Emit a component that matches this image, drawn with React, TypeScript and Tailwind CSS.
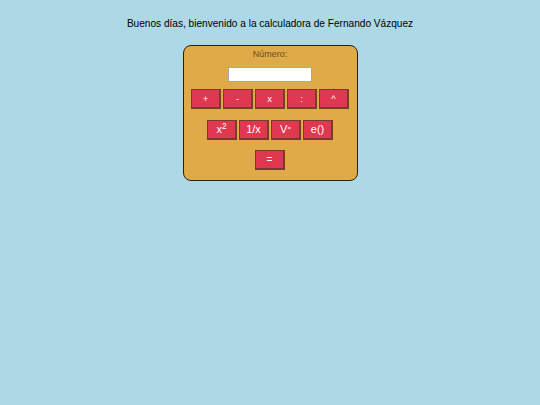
import React, { useState } from "react";

const btn =
  "h-[20px] w-[30px] bg-[#df3850] text-white leading-none border border-[#7d3a2c] border-b-2 border-r-2 flex items-center justify-center";

export default function App() {
  const [value, setValue] = useState("");

  return (
    <div className="min-h-screen w-full bg-[#add8e6] flex flex-col items-center pt-[17px] font-['Liberation_Sans',Arial,sans-serif]">
      <p className="text-[10.1px] leading-[14px] text-black">
        Buenos días, bienvenido a la calculadora de Fernando Vázquez
      </p>

      <div className="mt-[14px] w-[175px] rounded-[8px] border border-[#2a2010] bg-[#dfab48] flex flex-col items-center pt-[3px] pb-[10px]">
        <label className="text-[9px] leading-[10px] text-[#6b4a22]">Número:</label>
        <input
          value={value}
          onChange={(e) => setValue(e.target.value)}
          className="mt-[8px] h-[15px] w-[84px] bg-white border border-[#a8a8a8] outline-none text-[9px] px-1"
        />

        {/* operaciones */}
        <div className="mt-[7px] flex gap-[2px] text-[9.5px]">
          <button className={btn}>+</button>
          <button className={btn}>-</button>
          <button className={btn}>x</button>
          <button className={btn}>:</button>
          <button className={btn}>^</button>
        </div>

        <div className="mt-[11px] flex gap-[2px] text-[11px]">
          <button className={btn}>
            <span>
              x<sup>2</sup>
            </span>
          </button>
          <button className={btn}>1/x</button>
          <button className={btn}>
            <span>
              V<sup className="text-[6px]">=</sup>
            </span>
          </button>
          <button className={btn}>e()</button>
        </div>

        <div className="mt-[10px] flex text-[10px]">
          <button className={btn}>=</button>
        </div>
      </div>
    </div>
  );
}
